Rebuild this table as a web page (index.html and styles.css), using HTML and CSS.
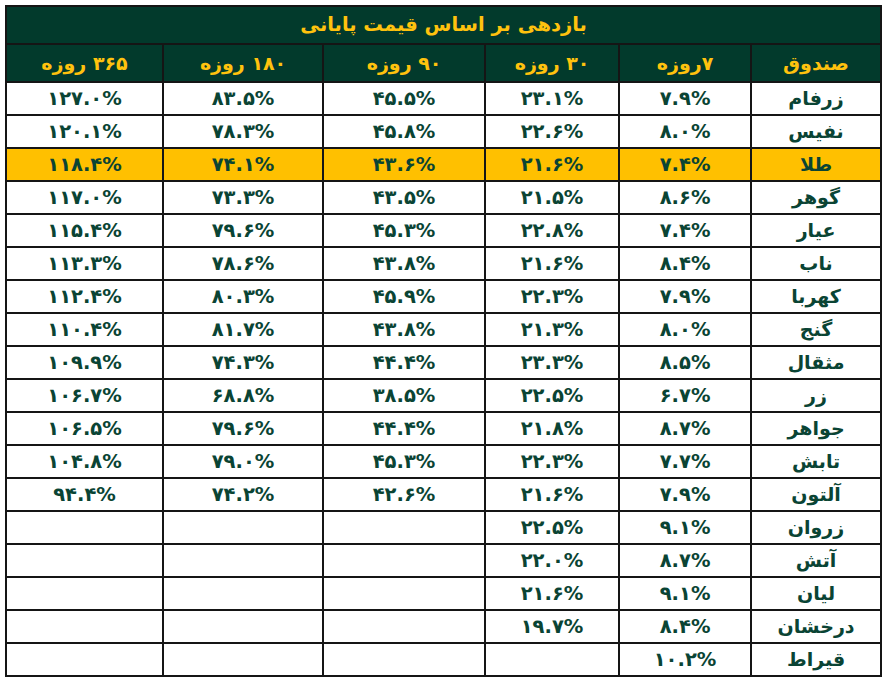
FILE: index.html
```html
<!DOCTYPE html>
<html lang="fa">
<head>
<meta charset="utf-8">
<link rel="stylesheet" href="styles.css">
</head>
<body>
<table class="returns" dir="rtl">
  <colgroup>
    <col class="c-name"><col class="c-7"><col class="c-30"><col class="c-90"><col class="c-180"><col class="c-365">
  </colgroup>
  <thead>
    <tr class="title"><th colspan="6">بازدهی بر اساس قیمت پایانی</th></tr>
    <tr class="head"><th>صندوق</th><th>۷روزه</th><th>۳۰ روزه</th><th>۹۰ روزه</th><th>۱۸۰ روزه</th><th>۳۶۵ روزه</th></tr>
  </thead>
  <tbody>
    <tr><td>زرفام</td><td>۷.۹%</td><td>۲۳.۱%</td><td>۴۵.۵%</td><td>۸۳.۵%</td><td>۱۲۷.۰%</td></tr>
    <tr><td>نفیس</td><td>۸.۰%</td><td>۲۲.۶%</td><td>۴۵.۸%</td><td>۷۸.۳%</td><td>۱۲۰.۱%</td></tr>
    <tr class="hl"><td>طلا</td><td>۷.۴%</td><td>۲۱.۶%</td><td>۴۳.۶%</td><td>۷۴.۱%</td><td>۱۱۸.۴%</td></tr>
    <tr><td>گوهر</td><td>۸.۶%</td><td>۲۱.۵%</td><td>۴۳.۵%</td><td>۷۳.۳%</td><td>۱۱۷.۰%</td></tr>
    <tr><td>عیار</td><td>۷.۴%</td><td>۲۲.۸%</td><td>۴۵.۳%</td><td>۷۹.۶%</td><td>۱۱۵.۴%</td></tr>
    <tr><td>ناب</td><td>۸.۴%</td><td>۲۱.۶%</td><td>۴۳.۸%</td><td>۷۸.۶%</td><td>۱۱۳.۳%</td></tr>
    <tr><td>کهربا</td><td>۷.۹%</td><td>۲۲.۳%</td><td>۴۵.۹%</td><td>۸۰.۳%</td><td>۱۱۲.۴%</td></tr>
    <tr><td>گنج</td><td>۸.۰%</td><td>۲۱.۳%</td><td>۴۳.۸%</td><td>۸۱.۷%</td><td>۱۱۰.۴%</td></tr>
    <tr><td>مثقال</td><td>۸.۵%</td><td>۲۳.۳%</td><td>۴۴.۴%</td><td>۷۴.۳%</td><td>۱۰۹.۹%</td></tr>
    <tr><td>زر</td><td>۶.۷%</td><td>۲۲.۵%</td><td>۳۸.۵%</td><td>۶۸.۸%</td><td>۱۰۶.۷%</td></tr>
    <tr><td>جواهر</td><td>۸.۷%</td><td>۲۱.۸%</td><td>۴۴.۴%</td><td>۷۹.۶%</td><td>۱۰۶.۵%</td></tr>
    <tr><td>تابش</td><td>۷.۷%</td><td>۲۲.۳%</td><td>۴۵.۳%</td><td>۷۹.۰%</td><td>۱۰۴.۸%</td></tr>
    <tr><td>آلتون</td><td>۷.۹%</td><td>۲۱.۶%</td><td>۴۲.۶%</td><td>۷۴.۲%</td><td>۹۴.۴%</td></tr>
    <tr><td>زروان</td><td>۹.۱%</td><td>۲۲.۵%</td><td></td><td></td><td></td></tr>
    <tr><td>آتش</td><td>۸.۷%</td><td>۲۲.۰%</td><td></td><td></td><td></td></tr>
    <tr><td>لیان</td><td>۹.۱%</td><td>۲۱.۶%</td><td></td><td></td><td></td></tr>
    <tr><td>درخشان</td><td>۸.۴%</td><td>۱۹.۷%</td><td></td><td></td><td></td></tr>
    <tr><td>قیراط</td><td>۱۰.۲%</td><td></td><td></td><td></td><td></td></tr>
  </tbody>
</table>
</body>
</html>
```

FILE: styles.css
```css
html, body {
  margin: 0;
  padding: 0;
  background: #ffffff;
}
body {
  padding: 5px 0 0 5px;
}
.returns {
  border-collapse: collapse;
  table-layout: fixed;
  width: 875px;
  font-family: "DejaVu Sans", "Noto Sans", sans-serif;
  font-weight: bold;
  color: #0a4434;
}
.c-name { width: 130px; }
.c-7 { width: 132px; }
.c-30 { width: 134px; }
.c-90 { width: 162px; }
.c-180 { width: 160px; }
.c-365 { width: 157px; }
.returns th,
.returns td {
  border: 2px solid #151515;
  padding: 0;
  text-align: center;
  vertical-align: middle;
  white-space: nowrap;
  overflow: hidden;
  line-height: 1;
}
.title th {
  height: 36px;
  background: #023a2c;
  color: #ffc20e;
  font-size: 19.5px;
  border-bottom: 1px solid #0f1a16;
}
.head th {
  height: 36px;
  background: #023a2c;
  color: #ffc20e;
  font-size: 19px;
}
.returns td {
  height: 31px;
  font-size: 19.5px;
  background: #ffffff;
}
.returns td:first-child {
  font-size: 19px;
}
.returns tr.hl td {
  background: #ffc000;
}
```
